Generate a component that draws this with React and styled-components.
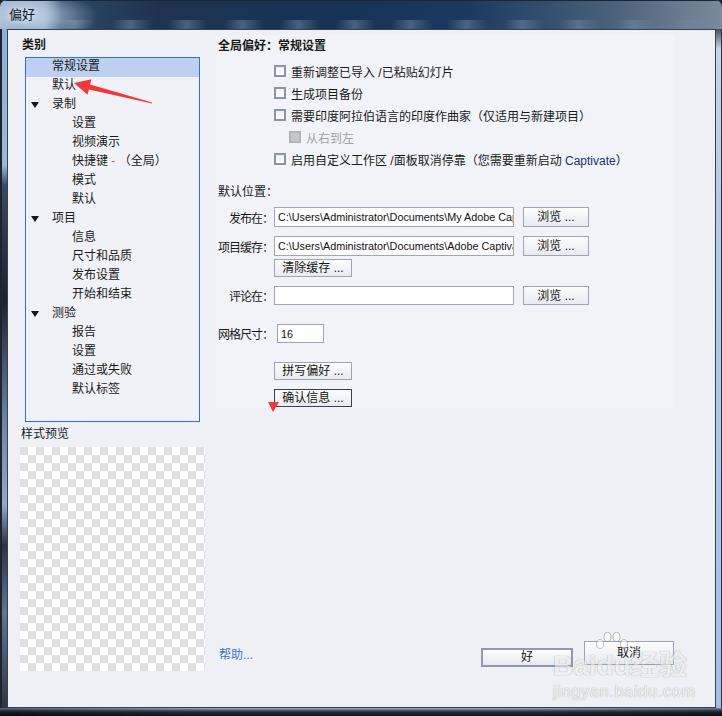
import React from 'react';
import styled, { createGlobalStyle } from 'styled-components';

const Global = createGlobalStyle`
  html, body { margin: 0; padding: 0; width: 722px; height: 716px; overflow: hidden; background: #1b2536; }
  * { box-sizing: border-box; }
  body {
    font-family: "Liberation Sans", "Noto Sans CJK SC", sans-serif;
    font-size: 12px;
    color: #1a1a1a;
  }
`;

const Window = styled.div`
  position: relative;
  width: 722px;
  height: 716px;
  display: grid;
  grid-template-rows: 29px 1fr 8px;
  grid-template-columns: 7px 1fr 6px;
  border-radius: 7px 7px 0 0;
  overflow: hidden;
  background: #1e2838;
`;

const TitleBar = styled.div`
  grid-column: 1 / -1;
  display: flex;
  align-items: flex-start;
  padding: 7px 0 0 9px;
  box-shadow: inset 0 1px 0 #1a2636;
  background:
    radial-gradient(ellipse 70px 26px at 28px 16px, rgba(196, 214, 232, 0.95), rgba(196, 214, 232, 0) 100%),
    repeating-linear-gradient(90deg, rgba(110, 135, 165, 0) 0, rgba(110, 135, 165, 0.55) 18px, rgba(110, 135, 165, 0) 40px, rgba(110, 135, 165, 0) 56px) 0 20px / 100% 9px no-repeat,
    linear-gradient(90deg, #94acc6 0, #8aa3bf 44px, #2d4666 62px, #1f3350 160px, #173356 360px, #1c3a60 470px, #4a6079 610px, #7b8a9b 722px);
`;

const TitleText = styled.span`
  font-size: 13px;
  line-height: 15px;
  color: #0d1825;
  text-shadow: 0 0 6px rgba(255, 255, 255, 0.9);
`;

const LeftFrame = styled.div`
  grid-column: 1;
  grid-row: 2;
  box-shadow: inset 2px 0 0 #1c2432;
  background: linear-gradient(180deg, #8fadd3 0%, #9cb8da 20%, #3a4a60 23%, #1b2230 40%, #6d86a6 58%, #91aac8 70%, #2a3444 76%, #5f7592 86%, #2e3644 100%);
`;

const RightFrame = styled.div`
  grid-column: 3;
  grid-row: 2;
  box-shadow: inset -1px 0 0 #2a3444;
  background: linear-gradient(180deg, #4a4f58 0, #c4d5ea 20px, #b6cce8 160px, #a3c0e4 100%);
`;

const BottomFrame = styled.div`
  grid-column: 1 / -1;
  grid-row: 3;
  background:
    linear-gradient(90deg, rgba(0, 0, 0, 0.4) 0, rgba(0, 0, 0, 0) 30%, rgba(0, 0, 0, 0) 70%, rgba(0, 0, 0, 0.3) 100%),
    linear-gradient(180deg, #a8b4c4 0, #5a697e 2px, #232c3a 4px, #0d131c 100%);
`;

const Content = styled.div`
  grid-column: 2;
  grid-row: 2;
  background: #eef0f5;
  border: 1px solid #36404f;
  display: grid;
  grid-template-columns: 202px 1fr;
  min-height: 0;
`;

const Sidebar = styled.div`
  display: flex;
  flex-direction: column;
`;

const SideHeading = styled.div`
  margin: 7px 0 0 14px;
  font-weight: 700;
  font-size: 12px;
  line-height: 16px;
`;

const Tree = styled.div`
  margin: 4px 0 0 17px;
  width: 175px;
  height: 365px;
  border: 1px solid #2f6fd6;
  background: #f0f2f7;
  display: flex;
  flex-direction: column;
`;

const TreeRow = styled.div`
  height: 19px;
  line-height: 17px;
  display: flex;
  align-items: flex-start;
  white-space: nowrap;
  padding-left: ${p => (p.$level === 1 ? 46 : 0)}px;
  background: ${p => (p.$selected ? '#bdd0ef' : 'transparent')};
`;

const Toggle = styled.span`
  width: 26px;
  flex: none;
  height: 17px;
  display: flex;
  align-items: center;
  padding-left: 5px;
`;

const Triangle = styled.span`
  width: 0;
  height: 0;
  border-left: 4px solid transparent;
  border-right: 4px solid transparent;
  border-top: 6px solid #151515;
`;

const Dash = styled.span`
  color: #d0631c;
`;

const PreviewLabel = styled.div`
  margin: 4px 0 0 13px;
  line-height: 16px;
`;

const Checker = styled.div`
  margin: 5px 0 0 12px;
  width: 185px;
  height: 224px;
  background: repeating-conic-gradient(#ffffff 0 25%, #e0e0e0 0 50%) 0 0 / 16px 16px;
`;

const Main = styled.div`
  display: flex;
  flex-direction: column;
  padding: 5px 0 40px 6px;
`;

const Panel = styled.div`
  width: 459px;
  padding: 3px 0 1px 2px;
  background: #f1f3f8;
  display: flex;
  flex-direction: column;
`;

const PanelTitle = styled.div`
  font-weight: 700;
  font-size: 12px;
  line-height: 16px;
`;

const CheckList = styled.div`
  margin: 6px 0 0 56px;
  display: flex;
  flex-direction: column;
`;

const CheckRow = styled.div`
  display: flex;
  align-items: center;
  gap: 5px;
  height: 22px;
  white-space: nowrap;
  padding-left: ${p => (p.$indent ? 15 : 0)}px;
  color: ${p => (p.$disabled ? '#a3a3a3' : '#1a1a1a')};
`;

const Box = styled.span`
  width: 12px;
  height: 12px;
  flex: none;
  border: 2px solid ${p => (p.$disabled ? '#b3b3b3' : '#8d93a7')};
  background: ${p => (p.$disabled ? '#c8c8c8' : 'linear-gradient(#eef0f4, #ffffff)')};
`;

const Latin = styled.span`
  font-family: "Liberation Sans", sans-serif;
  color: #22306c;
  font-size: 12px;
`;

const SectionLabel = styled.div`
  margin-top: 14px;
  line-height: 16px;
`;

const FieldRow = styled.div`
  display: grid;
  grid-template-columns: 56px 240px 66px;
  align-items: center;
  column-gap: 0;
  margin-top: ${p => p.$mt}px;
  height: ${p => p.$h || 20}px;
`;

const FieldLabel = styled.div`
  display: flex;
  justify-content: flex-end;
  white-space: nowrap;
  letter-spacing: -1px;
  padding-right: 1px;
`;

const TextInput = styled.div`
  height: ${p => p.$h || 20}px;
  width: ${p => (p.$w ? `${p.$w}px` : 'auto')};
  border: 1px solid #a0a6b8;
  background: #ffffff;
  overflow: hidden;
  white-space: nowrap;
  padding-left: 3px;
  font-family: "Liberation Sans", sans-serif;
  font-size: 10.8px;
  line-height: 18px;
  color: #111;
`;

const Button = styled.button`
  height: ${p => p.$h || 20}px;
  width: ${p => p.$w}px;
  margin: 0;
  margin-left: ${p => p.$ml || 0}px;
  padding: 0;
  border: ${p => p.$bw || 1}px solid ${p => p.$bc || '#9ea4b6'};
  background: linear-gradient(#fdfdfe, #e8eaf0);
  font-family: "Liberation Sans", "Noto Sans CJK SC", sans-serif;
  font-size: 12px;
  line-height: 14px;
  color: #151515;
  white-space: nowrap;
  display: flex;
  align-items: center;
  justify-content: center;
`;

const GridRow = styled.div`
  display: flex;
  align-items: center;
  gap: 4px;
  margin-top: 19px;
  height: 19px;
`;

const GridLabel = styled.span`
  white-space: nowrap;
  letter-spacing: -1px;
`;

const ButtonRow = styled.div`
  display: flex;
  margin: ${p => p.$mt}px 0 0 56px;
`;

const Footer = styled.div`
  margin-top: auto;
  display: flex;
  align-items: flex-start;
  padding-right: 41px;
`;

const HelpLink = styled.span`
  margin: 6px 0 0 3px;
  line-height: 16px;
  color: #3b78c4;
`;

const FooterButtons = styled.div`
  margin-left: auto;
  display: flex;
  align-items: flex-start;
  gap: 11px;
`;

const OkButton = styled(Button)`
  margin-top: 7px;
  align-items: flex-start;
  padding-top: 0;
`;

const Overlay = styled.svg`
  position: absolute;
  left: 0;
  top: 0;
  pointer-events: none;
`;

const Watermark = styled.div`
  position: absolute;
  left: 553px;
  top: 634px;
  pointer-events: none;
  display: flex;
  flex-direction: column;
  opacity: 0.6;
  color: rgba(255, 255, 255, 0.9);
  text-shadow: 0 0 1px rgba(110, 110, 110, 0.7), 0 0 1px rgba(110, 110, 110, 0.7);
`;

const WmMain = styled.div`
  display: flex;
  align-items: flex-end;
  height: 46px;
  font-family: "Liberation Sans", "Noto Sans CJK SC", sans-serif;
  font-weight: 700;
  font-size: 28px;
  line-height: 28px;
`;

const WmPaw = styled.span`
  position: relative;
  display: inline-flex;
  align-items: flex-end;
`;

const WmSub = styled.div`
  margin-top: 4px;
  font-family: "Liberation Sans", sans-serif;
  font-size: 16px;
  line-height: 16px;
  letter-spacing: 0.8px;
`;

const treeItems = [
  { t: '常规设置', level: 0, selected: true },
  { t: '默认', level: 0 },
  { t: '录制', level: 0, toggle: true },
  { t: '设置', level: 1 },
  { t: '视频演示', level: 1 },
  { t: 'shortcut', level: 1 },
  { t: '模式', level: 1 },
  { t: '默认', level: 1 },
  { t: '项目', level: 0, toggle: true },
  { t: '信息', level: 1 },
  { t: '尺寸和品质', level: 1 },
  { t: '发布设置', level: 1 },
  { t: '开始和结束', level: 1 },
  { t: '测验', level: 0, toggle: true },
  { t: '报告', level: 1 },
  { t: '设置', level: 1 },
  { t: '通过或失败', level: 1 },
  { t: '默认标签', level: 1 },
];

function TreeItem({ item }) {
  const label =
    item.t === 'shortcut' ? (
      <span>
        快捷键 <Dash>-</Dash> （全局）
      </span>
    ) : (
      item.t
    );
  return (
    <TreeRow $level={item.level} $selected={item.selected}>
      {item.level === 0 && <Toggle>{item.toggle && <Triangle />}</Toggle>}
      {label}
    </TreeRow>
  );
}

export default function App() {
  return (
    <>
      <Global />
      <Window>
        <TitleBar>
          <TitleText>偏好</TitleText>
        </TitleBar>
        <LeftFrame />
        <Content>
          <Sidebar>
            <SideHeading>类别</SideHeading>
            <Tree>
              {treeItems.map((it, i) => (
                <TreeItem key={i} item={it} />
              ))}
            </Tree>
            <PreviewLabel>样式预览</PreviewLabel>
            <Checker />
          </Sidebar>
          <Main>
            <Panel>
              <PanelTitle>全局偏好：常规设置</PanelTitle>
              <CheckList>
                <CheckRow>
                  <Box />
                  重新调整已导入 /已粘贴幻灯片
                </CheckRow>
                <CheckRow>
                  <Box />
                  生成项目备份
                </CheckRow>
                <CheckRow>
                  <Box />
                  需要印度阿拉伯语言的印度作曲家（仅适用与新建项目）
                </CheckRow>
                <CheckRow $indent $disabled>
                  <Box $disabled />
                  从右到左
                </CheckRow>
                <CheckRow>
                  <Box />
                  <span>
                    启用自定义工作区 /面板取消停靠（您需要重新启动 <Latin>Captivate</Latin>）
                  </span>
                </CheckRow>
              </CheckList>
              <SectionLabel>默认位置：</SectionLabel>
              <FieldRow $mt={7}>
                <FieldLabel>发布在：</FieldLabel>
                <TextInput>C:\Users\Administrator\Documents\My Adobe Captivate Projects</TextInput>
                <Button $w={66} $ml={9}>浏览 ...</Button>
              </FieldRow>
              <FieldRow $mt={9}>
                <FieldLabel>项目缓存：</FieldLabel>
                <TextInput>C:\Users\Administrator\Documents\Adobe Captivate Cached Projects</TextInput>
                <Button $w={66} $ml={9}>浏览 ...</Button>
              </FieldRow>
              <ButtonRow $mt={3}>
                <Button $w={78} $h={18}>清除缓存 ...</Button>
              </ButtonRow>
              <FieldRow $mt={9} $h={19}>
                <FieldLabel>评论在：</FieldLabel>
                <TextInput $h={19} />
                <Button $w={66} $h={19} $ml={9}>浏览 ...</Button>
              </FieldRow>
              <GridRow>
                <GridLabel>网格尺寸：</GridLabel>
                <TextInput $w={47} $h={19}>16</TextInput>
              </GridRow>
              <ButtonRow $mt={19}>
                <Button $w={78} $h={18}>拼写偏好 ...</Button>
              </ButtonRow>
              <ButtonRow $mt={9}>
                <Button $w={78} $h={18} $bc="#3a3f55">确认信息 ...</Button>
              </ButtonRow>
            </Panel>
            <Footer>
              <HelpLink>帮助...</HelpLink>
              <FooterButtons>
                <OkButton $w={92} $h={19} $bw={2} $bc="#9298ad">好</OkButton>
                <Button $w={90} $h={24}>取消</Button>
              </FooterButtons>
            </Footer>
          </Main>
        </Content>
        <RightFrame />
        <BottomFrame />
        <Overlay width="722" height="716" viewBox="0 0 722 716">
          <polygon
            points="74,83 91.5,79.2 90.1,84.6 152.1,102.5 151.9,103.5 88.9,89.4 87.5,94.8"
            fill="#f2383a"
          />
          <polygon points="268,402 279,402 273,412" fill="#f03a3a" />
        </Overlay>
        <Watermark>
          <WmMain>
            <span>Bai</span>
            <WmPaw>
              <svg width="34" height="20" viewBox="0 0 34 20" style={{ position: 'absolute', left: '-2px', top: '-21px' }}>
                <g fill="rgba(255,255,255,0.9)" stroke="rgba(110,110,110,0.7)" strokeWidth="1">
                  <ellipse cx="5" cy="13" rx="3.5" ry="4.5" />
                  <ellipse cx="12.5" cy="6" rx="3.5" ry="4.5" />
                  <ellipse cx="21.5" cy="6" rx="3.5" ry="4.5" />
                  <ellipse cx="29" cy="13" rx="3.5" ry="4.5" />
                </g>
              </svg>
              du
            </WmPaw>
            <span>经验</span>
          </WmMain>
          <WmSub>jingyan.baidu.com</WmSub>
        </Watermark>
      </Window>
    </>
  );
}
